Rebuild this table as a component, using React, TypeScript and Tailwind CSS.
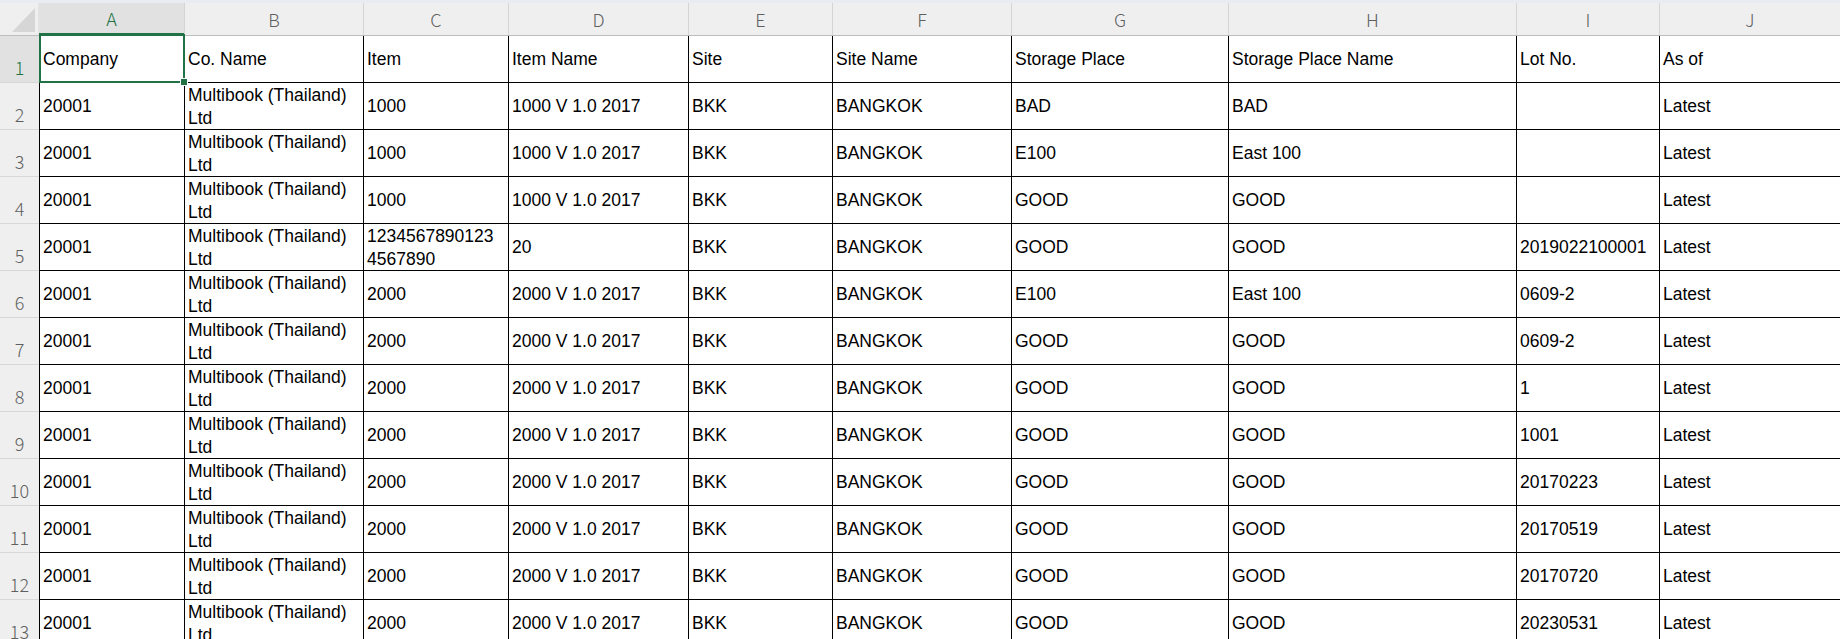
const COL_W = [
  'w-[145px]',
  'w-[179px]',
  'w-[145px]',
  'w-[180px]',
  'w-[144px]',
  'w-[179px]',
  'w-[217px]',
  'w-[288px]',
  'w-[143px]',
  'w-[181px]',
]

const LETTERS = ['A', 'B', 'C', 'D', 'E', 'F', 'G', 'H', 'I', 'J']

const HEAD = ['Company', 'Co. Name', 'Item', 'Item Name', 'Site', 'Site Name', 'Storage Place', 'Storage Place Name', 'Lot No.', 'As of']

// item, item name, storage place, storage place name, lot no.
const DATA: [string, string, string, string, string][] = [
  ['1000', '1000 V 1.0 2017', 'BAD', 'BAD', ''],
  ['1000', '1000 V 1.0 2017', 'E100', 'East 100', ''],
  ['1000', '1000 V 1.0 2017', 'GOOD', 'GOOD', ''],
  ['1234567890123\n4567890', '20', 'GOOD', 'GOOD', '2019022100001'],
  ['2000', '2000 V 1.0 2017', 'E100', 'East 100', '0609-2'],
  ['2000', '2000 V 1.0 2017', 'GOOD', 'GOOD', '0609-2'],
  ['2000', '2000 V 1.0 2017', 'GOOD', 'GOOD', '1'],
  ['2000', '2000 V 1.0 2017', 'GOOD', 'GOOD', '1001'],
  ['2000', '2000 V 1.0 2017', 'GOOD', 'GOOD', '20170223'],
  ['2000', '2000 V 1.0 2017', 'GOOD', 'GOOD', '20170519'],
  ['2000', '2000 V 1.0 2017', 'GOOD', 'GOOD', '20170720'],
  ['2000', '2000 V 1.0 2017', 'GOOD', 'GOOD', '20230531'],
]

const ROWS: string[][] = [
  HEAD,
  ...DATA.map(([item, itemName, place, placeName, lot]) => [
    '20001',
    'Multibook (Thailand) Ltd',
    item,
    itemName,
    'BKK',
    'BANGKOK',
    place,
    placeName,
    lot,
    'Latest',
  ]),
]

const headFont = { fontFamily: '"Noto Sans CJK JP", "Noto Sans", sans-serif' }

function RowHeader({ n }: { n: number }) {
  const active = n === 1
  return (
    <div
      className={`w-[39px] h-[47px] shrink-0 flex items-end justify-center pb-[6px] border-b border-[#d7d7d7] text-[18px] leading-[18px] font-light ${
        active ? 'bg-[#e1e1e1] text-[#217346]' : 'bg-[#efefef] text-[#5f5f5f]'
      }`}
      style={headFont}
    >
      {n}
    </div>
  )
}

function Cell({ value, col, selected }: { value: string; col: number; selected?: boolean }) {
  return (
    <div
      className={`${COL_W[col]} h-[47px] shrink-0 relative flex items-center pl-[3px] pr-[2px] pt-[1px] border-l border-b border-black bg-white text-[17.5px] leading-[22.5px] text-black whitespace-pre-line`}
    >
      <span className="block">{value}</span>
      {selected && (
        <>
          <div className="absolute -left-px -top-[2px] -right-px -bottom-px border-2 border-[#217346] z-10 pointer-events-none" />
          <div className="absolute -right-[4px] -bottom-[4px] w-[8px] h-[8px] bg-[#217346] border border-white z-20" />
        </>
      )}
    </div>
  )
}

export default function App() {
  return (
    <div
      className="w-[1840px] h-[639px] overflow-hidden bg-white"
      style={{ fontFamily: '"Liberation Sans", Arial, sans-serif' }}
    >
      <div className="h-[3px] bg-[#e9ecf0]" />

      {/* column letters */}
      <div className="flex h-[33px] bg-[#efefef] border-b border-[#bdbdbd]">
        <div className="w-[39px] shrink-0 relative border-r border-[#e4e4e4]">
          <svg width="36" height="32" viewBox="0 0 36 32" className="absolute left-0 top-0">
            <polygon points="12,29 35,29 35,5" fill="#d6d6d6" />
          </svg>
        </div>
        {LETTERS.map((l, i) => (
          <div
            key={l}
            className={`${COL_W[i]} shrink-0 flex items-center justify-center text-[18px] font-light ${
              i === 0
                ? 'bg-[#e1e1e1] text-[#217346] border-b-2 border-[#217346]'
                : 'text-[#5f5f5f] border-l border-[#d4d4d4]'
            }`}
            style={headFont}
          >
            {l}
          </div>
        ))}
      </div>

      {ROWS.map((row, r) => (
        <div key={r} className="flex">
          <RowHeader n={r + 1} />
          {row.map((v, c) => (
            <Cell key={c} value={v} col={c} selected={r === 0 && c === 0} />
          ))}
        </div>
      ))}
    </div>
  )
}
